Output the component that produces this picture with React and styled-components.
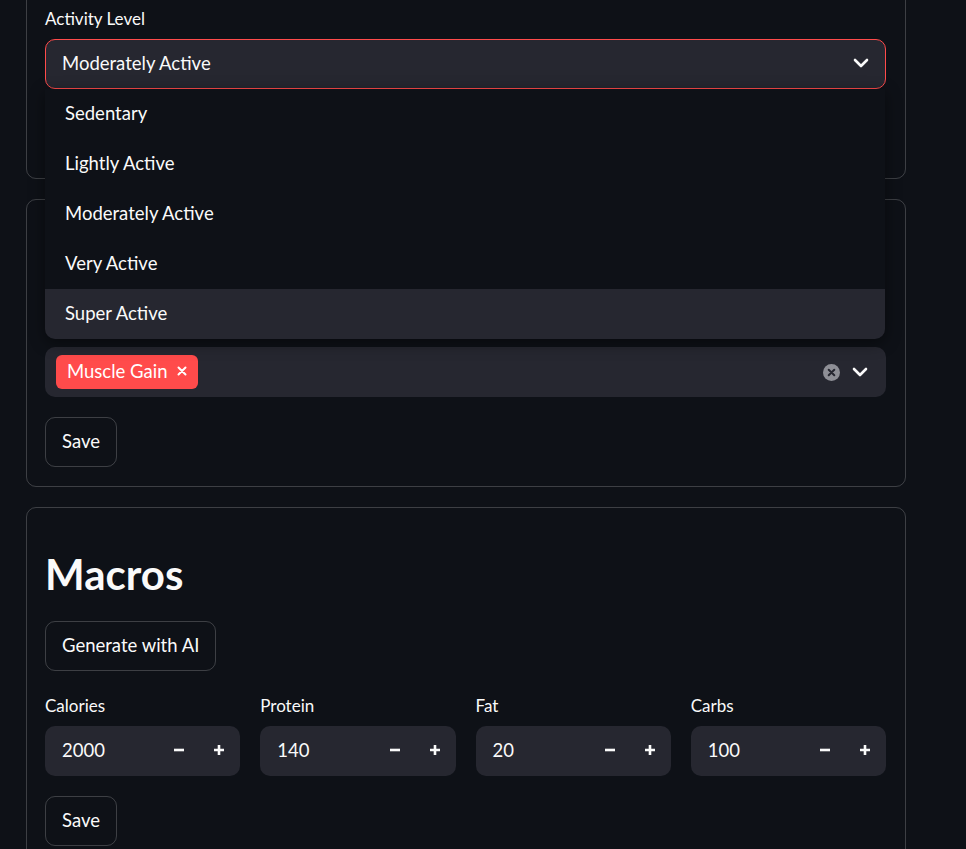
import React from "react";
import styled, { createGlobalStyle } from "styled-components";

const GlobalStyle = createGlobalStyle`
  html, body { margin: 0; padding: 0; background: #0e1117; }
  body {
    font-family: "Source Sans Pro", Lato, "Noto Sans", sans-serif;
    color: #fafafa;
    -webkit-font-smoothing: antialiased;
  }
  * { box-sizing: border-box; }
`;

const Page = styled.main`
  margin-top: -16px;
  padding-left: 26px;
  width: 906px;
  display: flex;
  flex-direction: column;
  gap: 20px;
`;

const Card = styled.section`
  position: relative;
  z-index: ${(p) => (p.$raised ? 2 : 1)};
  border: 1px solid rgba(250, 250, 250, 0.2);
  border-radius: 10px;
  padding: 19px 19px 19px 18px;
  display: flex;
  flex-direction: column;
  gap: 20px;
`;

const Field = styled.div`
  display: flex;
  flex-direction: column;
`;

const Label = styled.label`
  height: 30px;
  margin-bottom: 5px;
  display: flex;
  align-items: center;
  padding-bottom: 1px;
  font-size: 17px;
  color: #fafafa;
  visibility: ${(p) => (p.$covered ? "hidden" : "visible")};
`;

const SelectWrap = styled.div`
  position: relative;
`;

const Control = styled.div`
  height: 50px;
  border: 1px solid ${(p) => (p.$focused ? "#ff4b4b" : "transparent")};
  background: #262730;
  border-radius: 10px;
  display: flex;
  align-items: center;
  padding: ${(p) => (p.$tags ? "0 10px 0 10px" : "0 12px 2px 16px")};
  font-size: 18.5px;
`;

const Value = styled.span`
  flex: 1;
`;

const Menu = styled.ul`
  position: absolute;
  top: 100%;
  left: 0;
  right: 1px;
  margin: 0;
  padding: 0;
  list-style: none;
  background: #0e1117;
  border-radius: 0 0 10px 10px;
  box-shadow: 0 4px 16px rgba(0, 0, 0, 0.45);
  z-index: 10;
  overflow: hidden;
`;

const MenuItem = styled.li`
  height: 50px;
  display: flex;
  align-items: center;
  padding: 0 20px 3px;
  font-size: 18.5px;
  background: ${(p) => (p.$active ? "#262730" : "transparent")};
`;

const Tag = styled.span`
  height: 34px;
  display: inline-flex;
  align-items: center;
  gap: 10px;
  padding: 0 11px 2px;
  background: #ff4b4b;
  border-radius: 6px;
  font-size: 18.5px;
  color: #fff;
`;

const Spacer = styled.span`
  flex: 1;
`;

const IconSlot = styled.span`
  display: inline-flex;
  align-items: center;
  justify-content: center;
  width: ${(p) => p.$w || 28}px;
`;

const Button = styled.button`
  align-self: flex-start;
  height: 50px;
  padding: 0 16px 3px;
  background: transparent;
  border: 1px solid rgba(250, 250, 250, 0.2);
  border-radius: 10px;
  color: #fafafa;
  font-family: inherit;
  font-size: 18.5px;
  visibility: ${(p) => (p.$covered ? "hidden" : "visible")};
`;

const Heading = styled.h2`
  margin: 0;
  padding-top: ${(p) => (p.$covered ? 19 : 20)}px;
  font-size: 42px;
  line-height: 54px;
  font-weight: 700;
  color: #fafafa;
  visibility: ${(p) => (p.$covered ? "hidden" : "visible")};
`;

const Columns = styled.div`
  display: grid;
  grid-template-columns: repeat(4, 1fr);
  gap: 20px;
`;

const NumberBox = styled.div`
  height: 50px;
  background: #262730;
  border-radius: 10px;
  display: flex;
  align-items: center;
  padding: 0 1px 2px 17px;
  font-size: 18.5px;
`;

const StepButton = styled.span`
  width: 40px;
  height: 48px;
  display: inline-flex;
  align-items: center;
  justify-content: center;
`;

const Chevron = () => (
  <svg width="16" height="10" viewBox="0 0 16 10">
    <polyline points="2,2 8,8 14,2" fill="none" stroke="#fafafa" strokeWidth="2.6" strokeLinecap="round" strokeLinejoin="round" />
  </svg>
);

const SmallX = ({ color = "#fff", size = 10, sw = 2 }) => (
  <svg width={size} height={size} viewBox="0 0 10 10">
    <path d="M1.5 1.5 L8.5 8.5 M8.5 1.5 L1.5 8.5" stroke={color} strokeWidth={sw} strokeLinecap="round" />
  </svg>
);

const ClearIcon = () => (
  <svg width="17" height="17" viewBox="0 0 17 17">
    <circle cx="8.5" cy="8.5" r="8.5" fill="#8e8f96" />
    <path d="M5.7 5.7 L11.3 11.3 M11.3 5.7 L5.7 11.3" stroke="#262730" strokeWidth="2" strokeLinecap="round" />
  </svg>
);

const Minus = () => (
  <svg width="12" height="12" viewBox="0 0 12 12">
    <path d="M1 6 H11" stroke="#fafafa" strokeWidth="2.6" />
  </svg>
);

const Plus = () => (
  <svg width="12" height="12" viewBox="0 0 12 12">
    <path d="M1 6 H11 M6 1 V11" stroke="#fafafa" strokeWidth="2.6" />
  </svg>
);

const options = ["Sedentary", "Lightly Active", "Moderately Active", "Very Active", "Super Active"];
const macros = [
  ["Calories", 2000],
  ["Protein", 140],
  ["Fat", 20],
  ["Carbs", 100],
];

export default function App() {
  return (
    <>
      <GlobalStyle />
      <Page>
        <Card $raised>
          <Field>
            <Label>Activity Level</Label>
            <SelectWrap>
              <Control $focused>
                <Value>Moderately Active</Value>
                <IconSlot $w={24}>
                  <Chevron />
                </IconSlot>
              </Control>
              <Menu>
                {options.map((o) => (
                  <MenuItem key={o} $active={o === "Super Active"}>
                    {o}
                  </MenuItem>
                ))}
              </Menu>
            </SelectWrap>
          </Field>
          <Button $covered>Save</Button>
        </Card>

        <Card>
          <Heading $covered>Goals</Heading>
          <Field>
            <Label $covered>Goals</Label>
            <Control $tags>
              <Tag>
                Muscle Gain
                <SmallX size={10} sw={2} />
              </Tag>
              <Spacer />
              <IconSlot $w={28}>
                <ClearIcon />
              </IconSlot>
              <IconSlot $w={30}>
                <Chevron />
              </IconSlot>
            </Control>
          </Field>
          <Button>Save</Button>
        </Card>

        <Card>
          <Heading>Macros</Heading>
          <Button>Generate with AI</Button>
          <Columns>
            {macros.map(([name, val]) => (
              <Field key={name}>
                <Label>{name}</Label>
                <NumberBox>
                  <Value>{val}</Value>
                  <StepButton>
                    <Minus />
                  </StepButton>
                  <StepButton>
                    <Plus />
                  </StepButton>
                </NumberBox>
              </Field>
            ))}
          </Columns>
          <Button>Save</Button>
        </Card>
      </Page>
    </>
  );
}
